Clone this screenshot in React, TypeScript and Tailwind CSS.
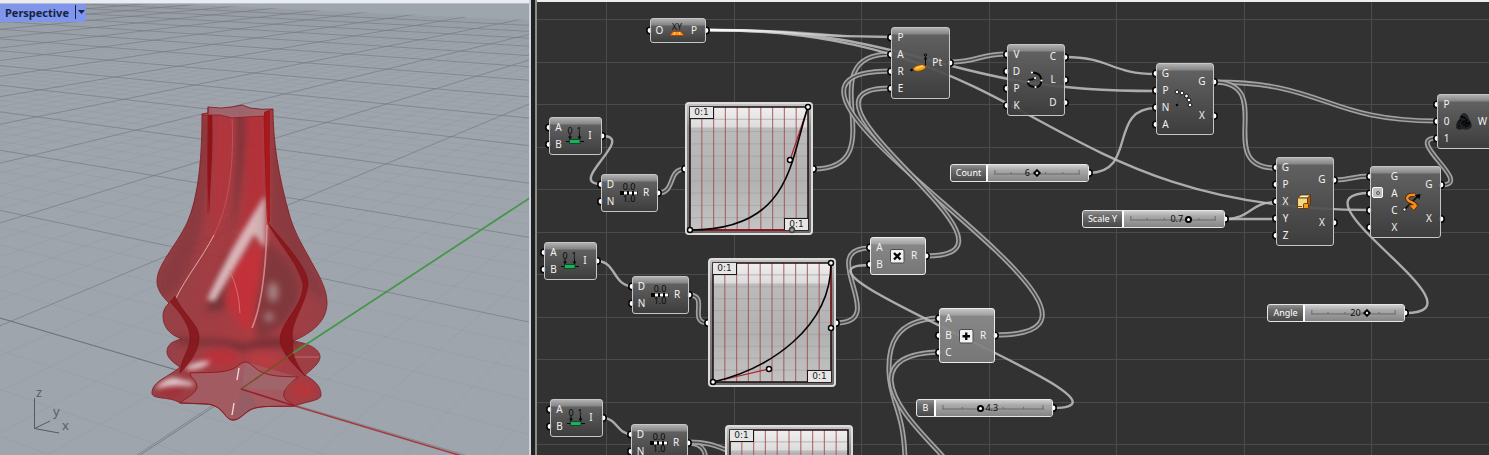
import React, { useState } from "react";

/* ---------- Perspective viewport ---------- */

const HORIZON = -62;
const FLOOR = 455;
const steps = (from: number, to: number) =>
  Array.from({ length: to - from + 1 }, (_, i) => from + i);

function GroundGrid() {
  const line = (key: string, x: number, vanish: number, k: number) => {
    const major = k % 5 === 0;
    return (
      <line
        key={key}
        x1={x}
        y1={FLOOR}
        x2={vanish}
        y2={HORIZON}
        stroke={major ? "#747a81" : "#8d949b"}
        strokeWidth={major ? 0.8 : 0.6}
        strokeOpacity={major ? 0.85 : k > 25 ? 0.32 : 0.5}
      />
    );
  };
  return (
    <g clipPath="url(#ground)">
      {steps(-3, 69).map((k) => line("a" + k, 465 + 138.7 * k, -1290, k))}
      {steps(-6, 69).map((k) => line("b" + k, 137 - 89 * k, 925, k))}
    </g>
  );
}

const SILHOUETTE =
  "M202 114 L208 113 L208 107 Q222 109 232 107 L242 105 L250 108 Q262 110 273 109 C273 140 278 175 290 217 C296 236 303 246 312 263 C320 277 327 290 327 303 C327 321 312 333 293 341 C306 343 320 348 320 357 C320 363 312 369 305 375 C314 380 321 386 321 395 C321 401 307 401 295 406 C272 407 260 405 250 410 C241 416 239 420 233 420 C224 420 224 405 206 404 L180 403 C170 396 152 400 152 393 C152 381 169 377 180 367 C172 362 167 357 167 352 C167 344 173 341 182 339 C170 335 163 327 163 316 C163 310 166 306 169 303 C161 295 157 289 157 281 C157 265 176 246 187 223 C199 196 202 155 202 114 Z";
const BASE =
  "M190 373 C206 372 222 374 235 368 Q243 361 246 362 Q249 362 254 367 C266 378 283 376 298 377 C287 386 280 393 286 400 L295 406 C272 407 260 405 250 410 C241 416 239 420 233 420 C224 420 224 405 206 404 L180 403 C184 399 198 393 197 386 C196 379 191 379 190 373 Z";
const RIGHT_FOLD =
  "M268 223 C276 240 298 262 303 284 C304 306 280 322 280 340 C281 353 295 366 305 376 C298 366 291 356 293 342 C288 324 307 304 308 283 C307 266 284 243 268 223 Z";
const LEFT_FOLD =
  "M170 302 C181 313 190 326 190 338 C190 348 183 357 181 366 L180 373 C192 360 199 350 199 337 C199 324 182 313 175 296 Z";

function Vase() {
  return (
    <g>
      <g clipPath="url(#vase)">
        <path d={SILHOUETTE} fill="url(#body)" fillOpacity="0.86" />
        <g filter="url(#soft)">
          <path d="M225 310 C222 260 238 240 237 105 L245 105 C246 180 236 240 205 312 Z" fill="#6d3036" opacity="0.8" />
          <path d="M200 118 C202 180 180 250 158 275 L158 300 C180 300 210 250 212 112 Z" fill="#7e3339" opacity="0.55" />
          <path d="M272 110 L270 225 L306 290 L326 300 L300 230 Z" fill="#7a363b" opacity="0.6" />
          <path d="M254 306 C266 270 266 220 269 240 C290 262 300 280 300 295 C292 320 275 335 256 338 Z" fill="#76353b" opacity="0.75" />
          <path d="M214 118 L232 118 C234 190 218 230 211 240 C214 200 214 170 214 118 Z" fill="#b8323a" opacity="0.65" />
          <path d="M247 118 L264 116 L264 190 L240 240 C248 200 247 160 247 118 Z" fill="#b62f35" opacity="0.75" />
          <path d="M236 262 L262 240 C260 290 254 320 248 334 Q236 318 226 300 Z" fill="#cb2f35" opacity="0.75" />
          <path d="M178 337 C200 342 222 336 244 344 C262 336 280 337 300 340 L296 346 C270 350 258 345 242 352 C226 342 200 346 178 344 Z" fill="#6a292f" opacity="0.8" />
          <ellipse cx="220" cy="358" rx="17" ry="8" fill="#c22f34" opacity="0.75" />
          <ellipse cx="266" cy="361" rx="15" ry="8" fill="#bd3a3f" opacity="0.7" />
          <ellipse cx="304" cy="390" rx="12" ry="9" fill="#bd3338" opacity="0.8" />
          <ellipse cx="170" cy="391" rx="13" ry="7" fill="#a52c32" opacity="0.8" />
        </g>
        <g filter="url(#gloss)">
          <path d="M265 196 C252 216 222 264 207 300 L215 301 C232 272 246 248 254 234 L263 246 Z" fill="#dcbcbf" opacity="0.95" />
          <path d="M266 196 L266 248 L256 236 Q254 220 266 196 Z" fill="#cda9ac" opacity="0.85" />
          <path d="M186 367 Q198 360 210 361 Q206 369 188 370 Z" fill="#e7cfd1" opacity="0.95" />
          <path d="M156 387 Q170 373 182 380 Q194 381 194 386 Q170 384 157 389 Z" fill="#e5ced0" opacity="0.95" />
        </g>
        <g filter="url(#soft)">
          <ellipse cx="273" cy="292" rx="5" ry="10" fill="#b49b9e" opacity="0.8" />
          <circle cx="269" cy="317" r="4" fill="#b8a0a4" opacity="0.85" />
        </g>
        <path d="M208 107 L212 110 C214 160 209 190 210 215 C206 180 208 150 208 107 Z" fill="#8c0d13" opacity="0.85" />
        <path d="M264 112 L270 110 L270 222 L268 223 C266 190 264 150 264 112 Z" fill="#a4151a" opacity="0.85" />
        <path d={RIGHT_FOLD} fill="#86141a" opacity="0.88" />
        <path d={LEFT_FOLD} fill="#84171c" opacity="0.88" />
        <path d="M202 115 L208 113 V107 Q222 109 242 105 Q256 109 273 109 L264 112 V116 L247 117 L232 118 L220 115 Z" fill="#a06d74" opacity="0.85" />
        <path d={BASE} fill="#a35e66" opacity="0.9" />
        <path d="M246 362 L298 377 L286 390 L241 389 Z" fill="#9c7078" opacity="0.45" />
        <path d="M240 375 L241 389 L233 420 L258 407 Z" fill="#86606a" opacity="0.4" />
      </g>
      <path d="M232 118 C235 180 224 215 214 235" fill="none" stroke="#c9565b" strokeWidth="0.8" />
      <path d="M214 235 C202 258 187 276 176 298" fill="none" stroke="#eab5b7" strokeWidth="0.9" />
      <path d="M267 225 C266 265 262 305 252 328" fill="none" stroke="#e0989b" strokeWidth="1.6" opacity="0.8" />
      <path d="M229 270 Q239 288 240 313" fill="none" stroke="#dd7b80" strokeWidth="0.8" />
      <path d="M239 368 L237 380 M234 403 L232 415" stroke="#f3e2e4" strokeWidth="1.4" opacity="0.9" />
      <path d="M294 357 H319" stroke="#c98083" strokeWidth="0.7" />
      <path d={BASE} fill="none" stroke="#98141a" strokeWidth="0.9" />
      <path d={SILHOUETTE} fill="none" stroke="#861d23" strokeWidth="0.9" />
      <path d="M202 115 L220 115 L232 118 L247 117 L265 116 V112 L273 109 M208 107 V213 M264 116 C266 170 266 210 268 223" fill="none" stroke="#a0151a" strokeWidth="0.8" />
      <path d={RIGHT_FOLD} fill="none" stroke="#830e13" strokeWidth="0.6" />
      <path d={LEFT_FOLD} fill="none" stroke="#830e13" strokeWidth="0.6" />
    </g>
  );
}

function Viewport() {
  return (
    <section
      aria-label="Perspective viewport"
      className="relative flex min-w-0 flex-[529] flex-col border-r-2 border-[#cfd5de] bg-[#9fa5ad]"
    >
      <div className="z-10 h-1 shrink-0 border-b border-[#b9bdc6] bg-[#e9ecf3]" />
      <button
        type="button"
        className="z-10 flex h-[18px] items-center self-start rounded-br-[3px] bg-[#7f96ec] pb-[2px] pl-[5px] font-['Noto_Sans',sans-serif] text-[11px] leading-none font-bold text-[#17233f]"
      >
        Perspective
        <span className="ml-[6px] flex h-[14px] w-[11px] items-center border-l border-[#17233f] pl-[2px]">
          <svg viewBox="0 0 7 4" className="h-1 w-[7px]" aria-hidden="true">
            <path d="M0 0H7L3.500 4Z" fill="#17233f" />
          </svg>
        </span>
      </button>
      <svg
        viewBox="0 0 529 455"
        preserveAspectRatio="xMinYMin slice"
        className="absolute inset-0 h-full w-full"
        role="img"
        aria-label="Translucent red vase on the ground plane"
      >
        <defs>
          <clipPath id="ground">
            <path d="M0 -4 L530 20 V455 H0Z" />
          </clipPath>
          <clipPath id="vase">
            <path d={SILHOUETTE} />
          </clipPath>
          <linearGradient id="body" x1="0" y1="0" x2="1" y2="0">
            <stop offset="0" stopColor="#8f3237" />
            <stop offset="0.35" stopColor="#a32c32" />
            <stop offset="0.6" stopColor="#ae2c32" />
            <stop offset="1" stopColor="#962f35" />
          </linearGradient>
          <filter id="soft" x="-50%" y="-50%" width="200%" height="200%">
            <feGaussianBlur stdDeviation="3.500" />
          </filter>
          <filter id="gloss" x="-20%" y="-20%" width="140%" height="140%">
            <feGaussianBlur stdDeviation="2.400" />
          </filter>
        </defs>
        <GroundGrid />
        <path d="M241 389 L-1290 -62 M241 389 L137 457" stroke="#656b72" strokeWidth="0.7" />
        <Vase />
        <path d="M293 353 L530 198" stroke="#409a44" strokeWidth="1.6" />
        <path d="M241 389 L293 353" stroke="#76521f" strokeWidth="1.5" />
        <path d="M241 389 L295 406" stroke="#96202a" strokeWidth="1.5" />
        <path d="M295 406 L462 456" stroke="#a33c3e" strokeWidth="1.6" />
        <g stroke="#555b62" strokeWidth="1" fill="none">
          <path d="M34.500 398 V428.500 L50 421 M34.500 428.500 L59 433" />
        </g>
        <g fill="#5a6067" fontFamily="Noto Sans, sans-serif" fontSize="13">
          <text x="36" y="397">z</text>
          <text x="53" y="416">y</text>
          <text x="62" y="430">x</text>
        </g>
      </svg>
    </section>
  );
}

/* ---------- Node icons ---------- */

type IconName =
  | "plane" | "domain" | "range" | "polar" | "curve" | "array" | "scale" | "rotate" | "weave" | "multiply" | "add";

function IconArt({ name }: { name: IconName }) {
  const digits = { fontFamily: "Noto Sans, sans-serif", fontSize: 9, fill: "#080808", textAnchor: "middle" as const };
  switch (name) {
    case "plane":
      return (
        <>
          <text x="10" y="9" {...digits} fill="#141414">XY</text>
          <path d="M6 10.500H14L17 14.500H3Z" fill="#f7941d" stroke="#a8380c" strokeWidth="0.800" />
          <path d="M8 11L7 14M12 11L13 14" stroke="#ffd257" strokeWidth="1" />
        </>
      );
    case "domain":
      return (
        <>
          <text x="5" y="8" {...digits}>0</text>
          <text x="14" y="8" {...digits}>1</text>
          <path d="M5 8V12M14.500 8V12M1 15.500H19" stroke="#080808" strokeWidth="1" />
          <path d="M3 10.500H7L5 13.500ZM12.500 10.500H16.500L14.500 13.500Z" fill="#080808" />
          <rect x="4.500" y="13.500" width="10.500" height="4" fill="#16b25c" stroke="#0b3d20" strokeWidth="0.800" />
        </>
      );
    case "range":
      return (
        <>
          <text x="10" y="7" {...digits}>0.0</text>
          <text x="10" y="19" {...digits}>1.0</text>
          <rect x="1" y="8" width="17.500" height="4" fill="#050505" />
          <path d="M5 8.500h3v3h-3zM10 8.500h3v3h-3zM15 8.500h3v3h-3z" fill="#fff" />
        </>
      );
    case "polar":
      return (
        <>
          <path d="M3 17L10 14M16.500 4V13" stroke="#080808" strokeWidth="1" />
          <ellipse cx="10.500" cy="15" rx="6.500" ry="3" fill="#f8a11c" stroke="#7b3a07" strokeWidth="0.700" transform="rotate(-12 10.500 15)" />
          <path d="M7 15.500Q10 14 14 13" stroke="#ffdf61" strokeWidth="1.300" fill="none" />
          <circle cx="16.500" cy="2" r="1.200" fill="none" stroke="#080808" />
          <path d="M14.500 6.500H18.500L16.500 3.500Z" fill="#080808" />
          <circle cx="2.500" cy="17" r="1.300" fill="#080808" />
        </>
      );
    case "curve":
      return (
        <>
          <path d="M7 2.500Q15.500 2.500 16.500 10Q16 17.500 10 17Q3 16.500 3 12.500Q3 9 7 9.500L10 8" stroke="#080808" strokeWidth="2" fill="none" />
          <g fill="#fff"><circle cx="7" cy="2.500" r="1.100" /><circle cx="16.500" cy="10.500" r="1.100" /><circle cx="10.500" cy="17" r="1.100" /><circle cx="3.500" cy="11.500" r="1.100" /><circle cx="10" cy="8" r="1.100" /></g>
        </>
      );
    case "array":
      return (
        <>
          <path d="M3 16L7 4M3 16L12 7" stroke="#3a3a3a" strokeWidth="0.700" strokeDasharray="1 1" />
          <circle cx="3" cy="16" r="1.300" fill="#080808" />
          <g fill="#fff" stroke="#111" strokeWidth="1">
            <circle cx="3" cy="3" r="1.900" /><circle cx="8" cy="4" r="1.900" /><circle cx="12.500" cy="7" r="1.900" /><circle cx="15" cy="11" r="1.900" /><circle cx="16" cy="16" r="1.900" />
          </g>
        </>
      );
    case "scale":
      return (
        <>
          <path d="M3.500 6L7 3H16.500L13.500 6Z" fill="#fff1b8" stroke="#4d2a05" strokeWidth="0.700" />
          <path d="M16.500 3V12L13.500 16V6Z" fill="#b05e11" stroke="#4d2a05" strokeWidth="0.700" />
          <rect x="3.500" y="6" width="10" height="10.500" rx="1" fill="#f9d681" stroke="#4d2a05" strokeWidth="0.800" />
          <rect x="9.500" y="11.500" width="5" height="5" rx="1" fill="#f59d16" stroke="#4d2a05" strokeWidth="0.800" />
          <path d="M4 14.500H8" stroke="#4d2a05" strokeWidth="0.800" />
        </>
      );
    case "rotate":
      return (
        <>
          <path d="M2 18L17 3" stroke="#080808" strokeWidth="1.600" />
          <path d="M13 3L18.500 2L17.500 7.500Z" fill="#080808" />
          <circle cx="2.500" cy="17.500" r="1.500" fill="#fff" stroke="#080808" strokeWidth="0.700" />
          <path d="M13 3C6 2 3 6 7 9C9 10.500 13 10.500 13.500 14" stroke="#4a1f04" strokeWidth="4" fill="none" />
          <path d="M6.500 13L16.500 12.500L12 18.500Z" fill="#f6921a" stroke="#4a1f04" strokeWidth="0.800" />
          <path d="M13 3C6 2 3 6 7 9C9 10.500 13 10.500 13.500 14" stroke="#f6921a" strokeWidth="2.400" fill="none" />
        </>
      );
    case "weave":
      return (
        <>
          <path d="M10 1Q14 2 15 7Q19 12 17 16Q12 19 9 17Q3 19 2 15Q2 10 5 8Q6 2 10 1Z" fill="#1e2022" />
          <path d="M7 5Q12 4 13 9M15 10Q16 15 11 15M5 15Q3 11 7 8M8 12Q9 8 12 10T9 13" stroke="#060606" strokeWidth="1.800" fill="none" />
          <path d="M9 3Q13 4 13 7M16 13Q14 17 11 16M4 14Q4 11 6 9" stroke="#3e4245" strokeWidth="0.600" fill="none" />
        </>
      );
    case "multiply":
    case "add":
      return (
        <>
          <rect x="3.500" y="3.500" width="13.500" height="13.500" rx="1.500" fill="#f2f2f2" stroke="#4a4a4a" />
          <path
            d={name === "multiply" ? "M7 7L13.500 13.500M13.500 7L7 13.500" : "M10.250 6.500V14M6.500 10.250H14"}
            stroke="#050505"
            strokeWidth="2.300"
          />
        </>
      );
  }
}

/* ---------- Graph data ---------- */

type NodeSpec = {
  id: string; title: string; x: number; y: number; w: number; icon: IconName;
  inputs: string[]; outputs: string[]; selected?: boolean; h?: number; option?: boolean;
};

const ROW = 17;
const NODES: NodeSpec[] = [
  { id: "xy", title: "XY Plane", x: 650, y: 18, w: 56, h: 25, icon: "plane", inputs: ["O"], outputs: ["P"] },
  { id: "dom1", title: "Construct Domain", x: 549, y: 117, w: 53, icon: "domain", inputs: ["A", "B"], outputs: ["I"] },
  { id: "dom2", title: "Construct Domain", x: 544, y: 242, w: 53, icon: "domain", inputs: ["A", "B"], outputs: ["I"] },
  { id: "dom3", title: "Construct Domain", x: 550, y: 399, w: 53, icon: "domain", inputs: ["A", "B"], outputs: ["I"] },
  { id: "rng1", title: "Range", x: 601, y: 174, w: 57, icon: "range", inputs: ["D", "N"], outputs: ["R"] },
  { id: "rng2", title: "Range", x: 632, y: 276, w: 57, icon: "range", inputs: ["D", "N"], outputs: ["R"] },
  { id: "rng3", title: "Range", x: 631, y: 424, w: 57, icon: "range", inputs: ["D", "N"], outputs: ["R"] },
  { id: "polar", title: "Point Polar", x: 891, y: 27, w: 59, icon: "polar", inputs: ["P", "A", "R", "E"], outputs: ["Pt"] },
  { id: "crv", title: "Interpolate", x: 1007, y: 44, w: 58, icon: "curve", inputs: ["V", "D", "P", "K"], outputs: ["C", "L", "D"] },
  { id: "arr", title: "Polar Array", x: 1156, y: 63, w: 58, icon: "array", inputs: ["G", "P", "N", "A"], outputs: ["G", "X"] },
  { id: "scl", title: "Scale NU", x: 1276, y: 157, w: 58, icon: "scale", inputs: ["G", "P", "X", "Y", "Z"], outputs: ["G", "X"] },
  { id: "rot", title: "Rotate Axis", x: 1370, y: 166, w: 71, icon: "rotate", inputs: ["G", "A", "C", "X"], outputs: ["G", "X"], option: true },
  { id: "weave", title: "Weave", x: 1437, y: 94, w: 58, icon: "weave", inputs: ["P", "0", "1"], outputs: ["W"] },
  { id: "mul", title: "Multiplication", x: 870, y: 237, w: 56, icon: "multiply", inputs: ["A", "B"], outputs: ["R"], selected: true },
  { id: "add", title: "Addition", x: 939, y: 308, w: 56, icon: "add", inputs: ["A", "B", "C"], outputs: ["R"], selected: true },
];

type SliderSpec = {
  id: string; label: string; x: number; y: number; w: number; labelW: number;
  min: number; max: number; step: number; value: number; side: "left" | "right"; diamond: boolean;
};

const SLIDERS: SliderSpec[] = [
  { id: "count", label: "Count", x: 950, y: 164, w: 139, labelW: 35, min: 0, max: 12, step: 1, value: 6, side: "left", diamond: true },
  { id: "scaley", label: "Scale Y", x: 1082, y: 210, w: 143, labelW: 39, min: 0, max: 1, step: 0.1, value: 0.7, side: "left", diamond: false },
  { id: "b", label: "B", x: 916, y: 399, w: 137, labelW: 17, min: 1, max: 10, step: 0.1, value: 4.3, side: "right", diamond: false },
  { id: "angle", label: "Angle", x: 1267, y: 304, w: 138, labelW: 35, min: 0, max: 30, step: 1, value: 20, side: "left", diamond: true },
];

type P = [number, number];
type MapperSpec = { id: string; x: number; y: number; h: number; curve?: [P, P, P, P]; ghost?: boolean };

/* Curve points are measured from the top-left of the plot, which is 118 wide. */
const MAPPERS: MapperSpec[] = [
  { id: "g1", x: 685, y: 102, h: 133, curve: [[0, 123], [102, 123], [100, 53], [118, 0]], ghost: true },
  { id: "g2", x: 708, y: 258, h: 129, curve: [[0, 119], [56, 106], [118, 65], [118, 0]] },
  { id: "g3", x: 725, y: 425, h: 129 },
];

type Wire = { a: P; b: P; list?: boolean; reach?: number };
const WIRES: Wire[] = [
  { a: [706, 30], b: [891, 37] },
  { a: [706, 30], b: [1156, 91] },
  { a: [706, 30], b: [1370, 210] },
  { a: [813, 169], b: [891, 54], list: true },
  { a: [995, 335], b: [891, 71], list: true },
  { a: [926, 256], b: [891, 88], list: true },
  { a: [950, 62], b: [1007, 54], list: true },
  { a: [1065, 57], b: [1156, 74] },
  { a: [1089, 173], b: [1156, 108] },
  { a: [1214, 82], b: [1437, 121], list: true },
  { a: [1214, 82], b: [1276, 168], list: true },
  { a: [1225, 219], b: [1276, 202] },
  { a: [1225, 219], b: [1276, 219] },
  { a: [1334, 180], b: [1370, 176], list: true },
  { a: [1441, 185], b: [1437, 138], list: true },
  { a: [1405, 313], b: [1370, 193] },
  { a: [602, 136], b: [601, 184] },
  { a: [597, 261], b: [632, 286] },
  { a: [603, 418], b: [631, 434] },
  { a: [658, 193], b: [685, 169], list: true },
  { a: [689, 295], b: [708, 323], list: true },
  { a: [688, 443], b: [725, 490], list: true },
  { a: [688, 442], b: [760, 456], list: true },
  { a: [836, 323], b: [870, 248], list: true },
  { a: [1053, 408], b: [870, 265], reach: 112 },
];
const LOOSE = [
  "M939 318 C895 320 888 345 889 372 C890 402 904 410 905 460",
  "M939 352 C905 353 891 364 891 380 C893 408 925 436 948 462",
];

const wirePath = ({ a, b, reach }: Wire) => {
  const c = reach ?? Math.max((b[0] - a[0]) / 2, Math.abs(b[1] - a[1]) * 0.75);
  return `M${a[0]} ${a[1]} C${a[0] + c} ${a[1]} ${b[0] - c} ${b[1]} ${b[0]} ${b[1]}`;
};

const nodeHeight = (n: NodeSpec) => n.h ?? n.inputs.length * ROW + 4;

const PORTS: P[] = [
  ...NODES.flatMap((n) => {
    const h = nodeHeight(n);
    const spread = (count: number, x: number): P[] =>
      steps(0, count - 1).map((i) => [x, n.y + 2 + ((h - 4) / count) * (i + 0.5)]);
    return [...spread(n.inputs.length, n.x), ...spread(n.outputs.length, n.x + n.w)];
  }),
  ...SLIDERS.map((s): P => [s.x + s.w, s.y + 9]),
  [685, 169], [813, 169], [708, 323], [836, 323],
];

/* Scroll position of the canvas in graph space. */
const PAN = { x: 537, y: 2 };
const at = (x: number, y: number) => ({ left: x - PAN.x, top: y - PAN.y });

function Wires() {
  return (
    <svg className="absolute inset-0 h-full w-full" aria-hidden="true">
      <defs>
        <linearGradient id="lit" gradientUnits="userSpaceOnUse" x1="706" y1="0" x2="860" y2="0">
          <stop offset="0" stopColor="#fff" />
          <stop offset="1" stopColor="#fff" stopOpacity="0" />
        </linearGradient>
      </defs>
      <g transform={`translate(${-PAN.x} ${-PAN.y})`}>
        <g stroke="#4b4b4b" shapeRendering="crispEdges">
          {steps(0, 12).map((i) => {
            const x = Math.round(606 + i * 127.5);
            return <line key={"v" + i} x1={x + 0.5} x2={x + 0.5} y1="0" y2="2000" />;
          })}
          {steps(0, 40).map((i) => {
            const y = Math.round(19 + i * 42.5);
            return <line key={"h" + i} x1="500" x2="4000" y1={y + 0.5} y2={y + 0.5} />;
          })}
        </g>
        <g fill="none">
          {[...WIRES.filter((w) => w.list).map(wirePath), ...LOOSE].map((d) => (
            <g key={d}>
              <path d={d} stroke="#a9a9a9" strokeOpacity="0.95" strokeWidth="5" />
              <path d={d} stroke="#4a4a4a" strokeWidth="1.600" />
            </g>
          ))}
          {WIRES.filter((w) => !w.list).map((w) => {
            const d = wirePath(w);
            return <path key={d} d={d} stroke="#bdbdbd" strokeOpacity="0.88" strokeWidth="2.400" />;
          })}
          <path d="M706 30 C770 30 810 33 860 38" stroke="url(#lit)" strokeWidth="2.600" />
        </g>
        {PORTS.map(([x, y]) => (
          <circle key={x + "-" + y} cx={x} cy={y} r="3.200" fill="#fff" stroke="#050505" strokeWidth="1.600" />
        ))}
      </g>
    </svg>
  );
}

function GraphNode({ node }: { node: NodeSpec }) {
  const look = node.selected
    ? "border-[#ececec] bg-[linear-gradient(to_bottom,#c4c4c4_0px,#a2a2a2_6px,#8b8b8bf2_7px,#7c7c7cec_100%)]"
    : "border-[#c6c6c6] bg-[linear-gradient(to_bottom,#b0b0b0_0px,#868686_6px,#646464ec_7px,#3e3e3eec_100%)]";
  return (
    <article
      aria-label={node.title}
      style={{ ...at(node.x, node.y), width: node.w, height: nodeHeight(node) }}
      className={"absolute flex rounded-[3px] border pr-[7px] pb-[2px] pl-1 font-['Noto_Sans',sans-serif] text-[10px] text-[#f2f2f2] " + look}
    >
      {node.option && (
        <span className="mt-5 -ml-[3px] flex size-[11px] items-center justify-center rounded-[2px] border border-white bg-[#bdbdbd]">
          <span className="size-1 rounded-full border border-[#555]" />
        </span>
      )}
      <div className={"flex flex-col justify-around leading-none " + (node.option ? "pl-[7px]" : "")}>
        {node.inputs.map((label) => (
          <span key={label} className="w-[9px] text-center">{label}</span>
        ))}
      </div>
      <div className="flex flex-1 items-center justify-center pt-[2px]">
        <svg viewBox="0 0 20 20" className="size-5 shrink-0 overflow-visible" aria-hidden="true">
          <IconArt name={node.icon} />
        </svg>
      </div>
      <div className="flex flex-col justify-around leading-none">
        {node.outputs.map((label) => (
          <span key={label} className="min-w-2 text-center">{label}</span>
        ))}
      </div>
    </article>
  );
}

function NumberSlider({ spec }: { spec: SliderSpec }) {
  const [value, setValue] = useState(spec.value);
  const ratio = (value - spec.min) / (spec.max - spec.min);
  return (
    <div
      style={{ ...at(spec.x, spec.y), width: spec.w }}
      className="absolute flex h-[18px] rounded-[3px] border border-[#e6e6e6] bg-[linear-gradient(to_bottom,#909090_0px,#6c6c6c_5px,#484848_100%)] font-['Noto_Sans',sans-serif] text-[9px]"
    >
      <label htmlFor={spec.id} style={{ width: spec.labelW }} className="shrink-0 text-center leading-4 text-white">
        {spec.label}
      </label>
      <div className="flex-1 rounded-r-[2px] border-l-2 border-white bg-[linear-gradient(to_bottom,#d0d0d0_0px,#aaaaaa_5px,#858585_100%)] pr-2 pl-[6px]">
        <div className="relative h-full">
          <svg viewBox="0 0 100 5" preserveAspectRatio="none" className="absolute inset-x-0 top-[5px] h-[5px] w-full" aria-hidden="true">
            <path
              d="M1 0V4M20 2V4M40 2V4M60 2V4M80 2V4M99 0V4M0 4H100"
              stroke="#6b6b6b"
              fill="none"
              vectorEffect="non-scaling-stroke"
            />
          </svg>
          <output
            htmlFor={spec.id}
            style={{ left: `${ratio * 100}%` }}
            className={
              "absolute top-0 leading-4 whitespace-nowrap text-[#0d0d0d] " +
              (spec.side === "left" ? "-translate-x-full pr-[7px]" : "pl-[6px]")
            }
          >
            {value}
          </output>
          <input
            id={spec.id}
            type="range"
            min={spec.min}
            max={spec.max}
            step={spec.step}
            value={value}
            onChange={(e) => setValue(Number(e.target.value))}
            className={
              "absolute inset-0 h-full w-full appearance-none bg-transparent [&::-webkit-slider-thumb]:appearance-none [&::-webkit-slider-thumb]:border-2 [&::-webkit-slider-thumb]:border-black [&::-webkit-slider-thumb]:bg-white " +
              (spec.diamond
                ? "[&::-webkit-slider-thumb]:size-[6px] [&::-webkit-slider-thumb]:rotate-45"
                : "[&::-webkit-slider-thumb]:size-[7px] [&::-webkit-slider-thumb]:rounded-full")
            }
          />
        </div>
      </div>
    </div>
  );
}

function GraphMapper({ spec }: { spec: MapperSpec }) {
  const h = spec.h - 10;
  const c = spec.curve;
  const chip =
    "absolute flex h-3 w-6 items-center justify-center border-[#1a1a1a] bg-[#e6e6e6] leading-none text-[#222] ";
  return (
    <figure
      aria-label="Graph mapper"
      style={{ ...at(spec.x, spec.y), height: spec.h }}
      className="absolute w-32 rounded-[4px] border-2 border-[#dcdcdc] bg-[linear-gradient(to_bottom,#c4c4c4_0px,#8c8c8c_24px,#6a6a6a_100%)] p-[3px] font-['DejaVu_Sans',sans-serif] text-[9px]"
    >
      <div className="relative h-full bg-[linear-gradient(to_bottom,#f0eeee_0px,#dddcdc_20px,#bcbbbb_21px,#b3b2b2_60%,#c4c3c3_100%)]">
        <svg viewBox={`0 0 118 ${h}`} className="h-full w-full overflow-visible" aria-hidden="true">
          <path d={steps(1, 9).map((i) => `M0 ${(h * i) / 10}H118`).join("")} stroke="#a3a3a3" strokeOpacity="0.7" />
          <path d={steps(1, 9).map((i) => `M${11.8 * i} 0V${h}`).join("")} stroke="#a24d50" strokeOpacity="0.75" strokeWidth="1.200" />
          <rect x="0" y="0" width="118" height={h} fill="none" stroke="#1c0b0c" strokeWidth="1.500" />
          {spec.ghost && <path d={`M0 ${h}H102`} stroke="#7c0b10" strokeWidth="1.500" />}
          {c && (
            <g fill="none">
              <path d={`M${c[0]}L${c[1]}M${c[3]}L${c[2]}`} stroke="#a5242a" strokeWidth="1.200" />
              <path d={`M${c[0]}C${c[1]} ${c[2]} ${c[3]}`} stroke="#050505" strokeWidth="1.600" />
            </g>
          )}
        </svg>
        <span className={chip + "top-0 left-0 border-r border-b"}>0:1</span>
        {c && <span className={chip + "right-0 bottom-0 border-t border-l"}>0:1</span>}
        {c && (
          <svg viewBox={`0 0 118 ${h}`} className="absolute inset-0 h-full w-full overflow-visible" aria-hidden="true">
            {c.map(([x, y], i) => {
              const faded = spec.ghost && i === 1;
              return (
                <circle key={i} cx={x} cy={y} r="2.500" fill={faded ? "#9a9a9a" : "#fff"} stroke={faded ? "#444" : "#050505"} strokeWidth="1.500" />
              );
            })}
          </svg>
        )}
      </div>
    </figure>
  );
}

export default function App() {
  return (
    <main className="flex h-screen overflow-hidden bg-[#323232]">
      <Viewport />
      <div className="w-[6px] shrink-0 border-r-2 border-[#8d8d88] bg-[#202121]" />
      <section aria-label="Node graph" className="flex min-w-0 flex-[952] flex-col">
        <div className="h-[2px] shrink-0 bg-[#eceff2]" />
        <div className="relative flex-1 overflow-hidden bg-[#323232]">
          <Wires />
          {MAPPERS.map((m) => <GraphMapper key={m.id} spec={m} />)}
          {NODES.map((n) => <GraphNode key={n.id} node={n} />)}
          {SLIDERS.map((s) => <NumberSlider key={s.id} spec={s} />)}
        </div>
      </section>
    </main>
  );
}
